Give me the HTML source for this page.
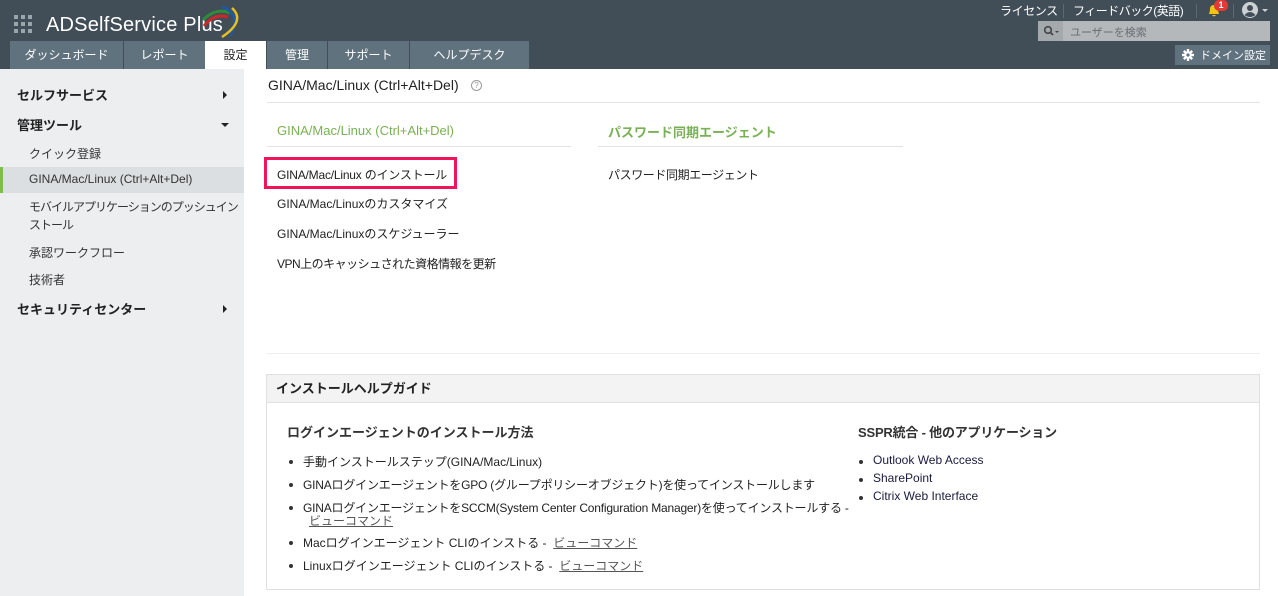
<!DOCTYPE html>
<html><head><meta charset="utf-8"><style>
*{margin:0;padding:0;box-sizing:border-box}
body{width:1278px;height:596px;overflow:hidden;font-family:"Liberation Sans","Noto Sans CJK JP",sans-serif;font-size:12px;color:#222;background:#fff;position:relative}
.a{position:absolute;white-space:nowrap}
#hdr{position:absolute;left:0;top:0;width:1278px;height:69px;background:#414d57}
.tab{position:absolute;top:41px;height:28px;background:#5f727e;color:#fff;font-size:12px;text-align:center;line-height:29px}
#side{position:absolute;left:0;top:69px;width:244px;height:527px;background:#eceeef}
.sh{font-weight:bold;font-size:13px;color:#222}
.si{font-size:12px;color:#333}
.arr{position:absolute;width:0;height:0}
.li{position:absolute;white-space:nowrap;font-size:12px}
.li:before{content:"";position:absolute;left:-14px;top:7px;width:4px;height:4px;border-radius:50%;background:#333}
.lk{color:#555;text-decoration:underline}
</style></head><body>
<div id="hdr"></div>
<svg class="a" style="left:14px;top:15px" width="20" height="20"><g fill="#9aa4ab">
<rect x="0" y="0" width="4" height="4"/><rect x="7" y="0" width="4" height="4"/><rect x="14" y="0" width="4" height="4"/>
<rect x="0" y="7" width="4" height="4"/><rect x="7" y="7" width="4" height="4"/><rect x="14" y="7" width="4" height="4"/>
<rect x="0" y="14" width="4" height="4"/><rect x="7" y="14" width="4" height="4"/><rect x="14" y="14" width="4" height="4"/></g></svg>
<div class="a" style="left:46px;top:14px;font-size:20px;color:#fff;letter-spacing:0.2px">ADSelfService Plus</div>
<svg class="a" style="left:198px;top:3px" width="46" height="36" fill="none">
<path d="M5 17 Q18 4 32 10" stroke="#2e8b3a" stroke-width="3"/>
<path d="M6 23 Q16 10 30 14" stroke="#c62a2a" stroke-width="3"/>
<path d="M24 4 Q44 10 32 33" stroke="#2456a8" stroke-width="3"/>
<path d="M34 5 Q48 18 24 34" stroke="#e7c21c" stroke-width="2.5"/></svg>
<div class="tab" style="left:10px;width:113px">ダッシュボード</div>
<div class="tab" style="left:124px;width:81px">レポート</div>
<div class="tab" style="left:205px;width:61px;background:#fff;color:#222">設定</div>
<div class="tab" style="left:267px;width:60px">管理</div>
<div class="tab" style="left:328px;width:81px">サポート</div>
<div class="tab" style="left:410px;width:119px">ヘルプデスク</div>
<div class="a" style="left:1000px;top:2px;color:#fff;font-size:12px;letter-spacing:-0.4px">ライセンス</div>
<div class="a" style="left:1063px;top:4px;width:1px;height:14px;background:#5d6a74"></div>
<div class="a" style="left:1073px;top:2px;color:#fff;font-size:12px;letter-spacing:-0.5px">フィードバック(英語)</div>
<div class="a" style="left:1196px;top:4px;width:1px;height:14px;background:#5d6a74"></div>
<svg class="a" style="left:1206px;top:2px" width="16" height="16"><path d="M3 12 Q4 9 4 7 Q4 3 8 3 Q12 3 12 7 Q12 9 13 12Z M6 13 Q8 16 10 13Z" fill="#f0c419"/></svg>
<div class="a" style="left:1214px;top:0;width:14px;height:11px;border-radius:5px;background:#e53935;color:#fff;font-size:9px;font-weight:bold;text-align:center;line-height:11px">1</div>
<div class="a" style="left:1233px;top:4px;width:1px;height:14px;background:#5d6a74"></div>
<svg class="a" style="left:1241px;top:1px" width="30" height="18"><circle cx="9" cy="9" r="8" fill="#ccd1d5"/><circle cx="9" cy="7" r="3" fill="#414d57"/><path d="M3.5 14 Q9 8 14.5 14 Q9 18 3.5 14Z" fill="#414d57"/><path d="M21 8 L27 8 L24 11Z" fill="#ccd1d5"/></svg>
<div class="a" style="left:1038px;top:21px;width:232px;height:20px;background:#b4b8bb"></div>
<div class="a" style="left:1038px;top:21px;width:25px;height:20px;background:#a4a9ac"></div>
<svg class="a" style="left:1043px;top:25px" width="18" height="12"><circle cx="5" cy="5" r="3.3" stroke="#444" stroke-width="1.6" fill="none"/><path d="M7.5 7.5 L10 10" stroke="#444" stroke-width="1.8"/><path d="M12 6 L16 6 L14 8Z" fill="#444"/></svg>
<div class="a" style="left:1070px;top:24px;font-size:11px;color:#6a6e72">ユーザーを検索</div>
<div class="a" style="left:1175px;top:45px;width:95px;height:20px;background:#5f727e"></div>
<svg class="a" style="left:1181px;top:48px" width="14" height="14"><g stroke="#fff" stroke-width="2.4"><path d="M7 1V13M1 7H13M2.8 2.8L11.2 11.2M11.2 2.8L2.8 11.2"/></g><circle cx="7" cy="7" r="3.8" fill="#fff"/><circle cx="7" cy="7" r="1.6" fill="#5f727e"/></svg>
<div class="a" style="left:1200px;top:47px;color:#fff;font-size:11px">ドメイン設定</div>

<div id="side"></div>
<div class="a sh" style="left:17px;top:85px">セルフサービス</div>
<div class="arr" style="left:223px;top:91px;border-left:4px solid #222;border-top:4px solid transparent;border-bottom:4px solid transparent"></div>
<div class="a sh" style="left:17px;top:115px">管理ツール</div>
<div class="arr" style="left:221px;top:123px;border-top:4px solid #222;border-left:4px solid transparent;border-right:4px solid transparent"></div>
<div class="a si" style="left:29px;top:145px">クイック登録</div>
<div class="a" style="left:0;top:167px;width:244px;height:26px;background:#dcdfe1"></div>
<div class="a" style="left:0;top:167px;width:3px;height:26px;background:#7cbf4e"></div>
<div class="a si" style="left:29px;top:172px">GINA/Mac/Linux (Ctrl+Alt+Del)</div>
<div class="a si" style="left:29px;top:198px;line-height:18px;letter-spacing:-1px">モバイルアプリケーションのプッシュイン<br>ストール</div>
<div class="a si" style="left:29px;top:244px">承認ワークフロー</div>
<div class="a si" style="left:29px;top:271px">技術者</div>
<div class="a sh" style="left:17px;top:299px">セキュリティセンター</div>
<div class="arr" style="left:223px;top:305px;border-left:4px solid #222;border-top:4px solid transparent;border-bottom:4px solid transparent"></div>

<div class="a" style="left:268px;top:77px;font-size:14px;color:#222">GINA/Mac/Linux (Ctrl+Alt+Del)</div>
<div class="a" style="left:471px;top:80px;width:11px;height:11px;border:1px solid #999;border-radius:50%;font-size:8px;color:#999;text-align:center;line-height:10px">?</div>
<div class="a" style="left:267px;top:102px;width:993px;height:1px;background:#e3e3e3"></div>
<div class="a" style="left:277px;top:123px;font-size:13px;color:#7ab055">GINA/Mac/Linux (Ctrl+Alt+Del)</div>
<div class="a" style="left:267px;top:146px;width:304px;height:1px;background:#e3e3e3"></div>
<div class="a" style="left:608px;top:122px;font-size:13px;font-weight:bold;color:#7ab055">パスワード同期エージェント</div>
<div class="a" style="left:598px;top:146px;width:305px;height:1px;background:#e3e3e3"></div>
<div class="a" style="left:264px;top:157px;width:193px;height:32px;border:3px solid #f0145a"></div>
<div class="a" style="left:277px;top:166px;letter-spacing:-0.2px">GINA/Mac/Linux のインストール</div>
<div class="a" style="left:277px;top:195px">GINA/Mac/Linuxのカスタマイズ</div>
<div class="a" style="left:277px;top:225px">GINA/Mac/Linuxのスケジューラー</div>
<div class="a" style="left:277px;top:255px;letter-spacing:-0.5px">VPN上のキャッシュされた資格情報を更新</div>
<div class="a" style="left:608px;top:166px;letter-spacing:-0.4px">パスワード同期エージェント</div>
<div class="a" style="left:267px;top:353px;width:993px;height:1px;background:#eee"></div>

<div class="a" style="left:266px;top:374px;width:994px;height:216px;border:1px solid #e0e0e0"></div>
<div class="a" style="left:267px;top:375px;width:992px;height:28px;background:#f3f3f3;border-bottom:1px solid #e0e0e0"></div>
<div class="a" style="left:276px;top:378px;font-size:13px;font-weight:bold;color:#222">インストールヘルプガイド</div>
<div class="a" style="left:287px;top:422px;font-size:13px;font-weight:bold;color:#333">ログインエージェントのインストール方法</div>
<div class="li" style="left:303px;top:453px">手動インストールステップ(GINA/Mac/Linux)</div>
<div class="li" style="left:303px;top:476px;letter-spacing:-0.2px">GINAログインエージェントをGPO (グループポリシーオブジェクト)を使ってインストールします</div>
<div class="li" style="left:303px;top:499px;letter-spacing:-0.2px">GINAログインエージェントをSCCM(System Center Configuration Manager)を使ってインストールする -</div>
<div class="a lk" style="left:309px;top:512px">ビューコマンド</div>
<div class="li" style="left:303px;top:534px">Macログインエージェント CLIのインストる - &nbsp;<span class="lk">ビューコマンド</span></div>
<div class="li" style="left:303px;top:557px">Linuxログインエージェント CLIのインストる - &nbsp;<span class="lk">ビューコマンド</span></div>
<div class="a" style="left:858px;top:422px;font-size:13px;font-weight:bold;color:#333;letter-spacing:-0.2px">SSPR統合 - 他のアプリケーション</div>
<div class="li" style="left:873px;top:453px;color:#1a1a40">Outlook Web Access</div>
<div class="li" style="left:873px;top:471px;color:#1a1a40">SharePoint</div>
<div class="li" style="left:873px;top:489px;color:#1a1a40">Citrix Web Interface</div>
</body></html>
